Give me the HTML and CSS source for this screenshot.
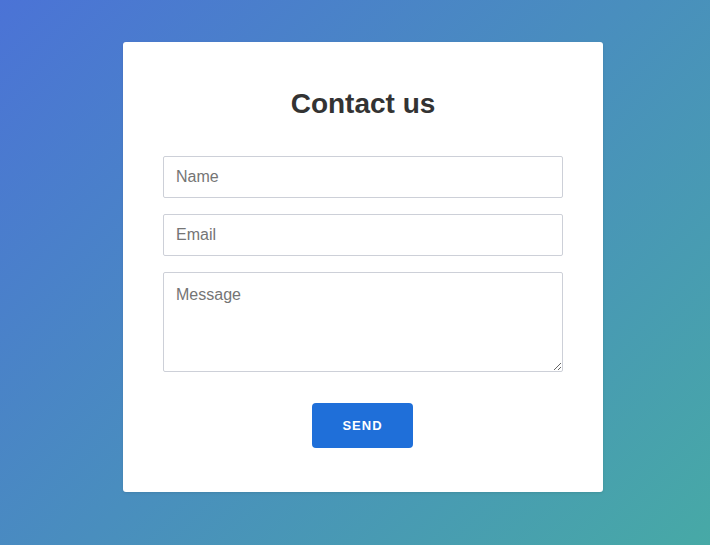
FILE: index.html
```html
<!DOCTYPE html>
<html>
<head>
<meta charset="utf-8">
<link rel="stylesheet" href="styles.css">
</head>
<body>
<div class="page">
  <form class="card">
    <h2 class="title">Contact us</h2>
    <input class="field" type="text" placeholder="Name">
    <input class="field" type="text" placeholder="Email">
    <textarea class="field area" placeholder="Message"></textarea>
    <div class="actions"><button class="send" type="button">SEND</button></div>
  </form>
</div>
</body>
</html>
```
FILE: styles.css
```css
html, body {
  height: 100%;
}
html {
  background: linear-gradient(135deg, #4b73d6 0%, #47a9a6 100%);
  background-attachment: fixed;
  min-height: 100%;
}
body {
  margin: 8px;
  font-family: "Liberation Sans", Arial, sans-serif;
}
.page {
  width: 100vw;
  display: flex;
  justify-content: center;
  padding-top: 34px;
}
.card {
  width: 480px;
  height: 450px;
  box-sizing: border-box;
  background: #fff;
  border-radius: 3px;
  padding: 46px 40px 0;
  display: flex;
  flex-direction: column;
  box-shadow: 0 1px 3px rgba(0,0,0,0.1);
}
.title {
  margin: 0 0 36px;
  font-size: 28px;
  line-height: 32px;
  font-weight: bold;
  color: #333;
  text-align: center;
}
.field {
  display: block;
  width: 400px;
  height: 42px;
  box-sizing: border-box;
  border: 1px solid #cdd0d8;
  border-radius: 2px;
  padding: 0 12px;
  margin: 0 0 16px;
  font-family: "Liberation Sans", Arial, sans-serif;
  font-size: 16px;
  color: #333;
  outline: none;
}
.field::placeholder {
  color: #757575;
}
.area {
  height: 100px;
  padding: 13px 12px 12px;
  resize: vertical;
  margin-bottom: 31px;
}
.actions {
  display: flex;
  justify-content: center;
  padding-right: 1px;
}
.send {
  width: 101px;
  height: 45px;
  border: none;
  border-radius: 4px;
  background: #1f6fd9;
  color: #fff;
  font-family: "Liberation Sans", Arial, sans-serif;
  font-weight: bold;
  font-size: 13px;
  letter-spacing: 1px;
  cursor: pointer;
}
```
